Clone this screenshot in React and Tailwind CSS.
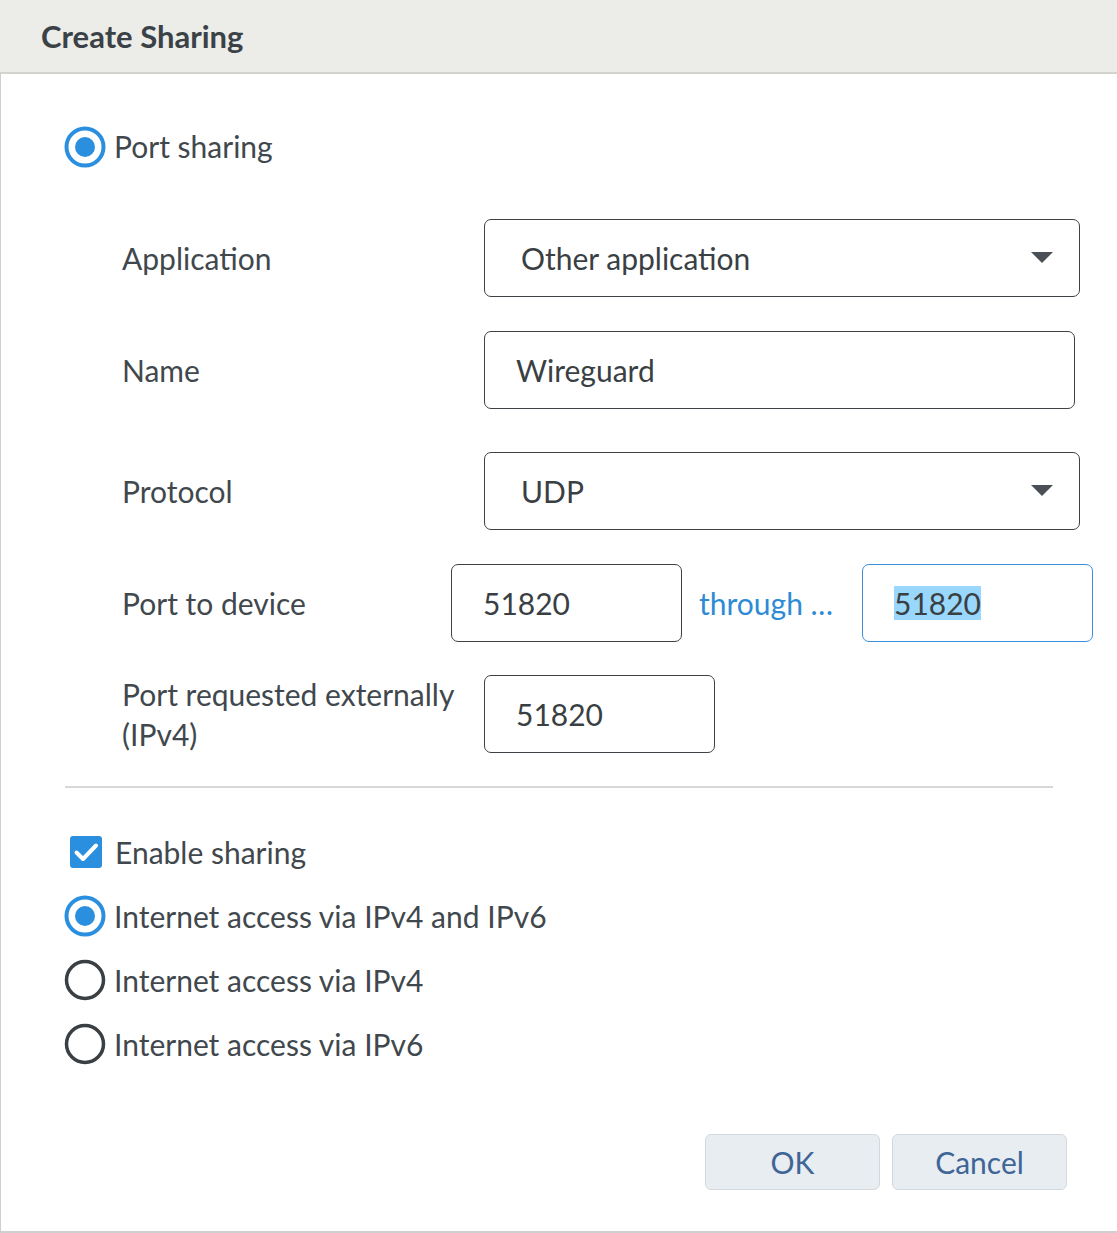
import React from 'react';

const font = { fontFamily: 'Lato, "Open Sans", sans-serif' };

function Radio({ checked }) {
  return (
    <svg width="42" height="42" viewBox="0 0 42 42" className="shrink-0">
      <circle
        cx="21"
        cy="21"
        r="18.5"
        fill="white"
        stroke={checked ? '#2b8fe0' : '#3a3f44'}
        strokeWidth={checked ? 4 : 3.5}
      />
      {checked && <circle cx="21" cy="21" r="10" fill="#2b8fe0" />}
    </svg>
  );
}

function Checkbox() {
  return (
    <div className="w-[32px] h-[32px] rounded-[3px] bg-[#2b8fe0] flex items-center justify-center shrink-0">
      <svg width="28" height="28" viewBox="0 0 28 28">
        <path d="M4.5 14.5l6.5 6.5L24 7.5" fill="none" stroke="white" strokeWidth="4" strokeLinecap="round" strokeLinejoin="round" />
      </svg>
    </div>
  );
}

function Caret() {
  return (
    <svg width="22" height="12" viewBox="0 0 22 12">
      <path d="M0 0h22L11 11z" fill="#4a5055" />
    </svg>
  );
}

function Field({ children, className = '' }) {
  return (
    <div className={`h-[78px] border-[1.5px] border-[#3d4247] rounded-[7px] bg-white flex items-center text-[30px] text-[#3a3f44] ${className}`}>
      {children}
    </div>
  );
}

function Row({ label, children, className = '' }) {
  return (
    <div className={`flex items-center ${className}`}>
      <div className="w-[483px] pl-[121px] shrink-0 text-[30px] text-[#41484d] leading-[40px]">{label}</div>
      {children}
    </div>
  );
}

function Option({ children, checked }) {
  return (
    <div className="flex items-center gap-[8px] h-[42px]">
      <Radio checked={checked} />
      <span className="text-[30px] leading-[40px] text-[#41484d]">{children}</span>
    </div>
  );
}

export default function App() {
  return (
    <div className="w-[1117px] h-[1233px] bg-white" style={font}>
      <div className="h-[74px] bg-[#ecece8] border-b-2 border-[#d3d3d0] flex items-center pl-[41px]">
        <span className="text-[31px] font-bold text-[#3b4247]">Create Sharing</span>
      </div>
      <div className="h-[1159px] border-l border-b-2 border-[#cfcfcf] relative">
        <div className="flex items-center gap-[8px] pl-[63px] pt-[50px]">
          <Radio checked />
          <span className="text-[30px] text-[#41484d]">Port sharing</span>
        </div>

        <Row label="Application" className="mt-[50px]">
          <Field className="w-[596px] pl-[36px] pr-[26px] justify-between">
            <span>Other application</span>
            <Caret />
          </Field>
        </Row>

        <Row label="Name" className="mt-[34px]">
          <Field className="w-[591px] pl-[31px]">
            <span>Wireguard</span>
          </Field>
        </Row>

        <Row label="Protocol" className="mt-[43px]">
          <Field className="w-[596px] pl-[36px] pr-[26px] justify-between">
            <span>UDP</span>
            <Caret />
          </Field>
        </Row>

        <div className="flex items-center mt-[34px]">
          <div className="w-[450px] pl-[121px] shrink-0 text-[30px] text-[#41484d]">Port to device</div>
          <Field className="w-[231px] pl-[31px]">
            <span>51820</span>
          </Field>
          <span className="ml-[17px] w-[163px] text-[30px] text-[#2d8bd6]">through …</span>
          <Field className="w-[231px] pl-[31px] !border-[#3a8fd8]">
            <span className="bg-[#99d8fc] leading-[34px]">51820</span>
          </Field>
        </div>

        <Row label={<>Port requested externally<br />(IPv4)</>} className="mt-[32px]">
          <Field className="w-[231px] pl-[31px]">
            <span>51820</span>
          </Field>
        </Row>

        <div className="ml-[64px] w-[988px] h-[2px] bg-[#d8d8d8] mt-[32px]" />

        <div className="pl-[63px] mt-[43px] flex flex-col gap-[22px]">
          <div className="flex items-center gap-[13px] pl-[6px] h-[42px]">
            <Checkbox />
            <span className="text-[30px] leading-[40px] text-[#41484d]">Enable sharing</span>
          </div>
          <Option checked>Internet access via IPv4 and IPv6</Option>
          <Option>Internet access via IPv4</Option>
          <Option>Internet access via IPv6</Option>
        </div>

        <div className="absolute right-[50px] bottom-[41px] flex gap-[12px]">
          <button className="w-[175px] h-[56px] rounded-[6px] bg-[#e8edf2] border-[1.5px] border-[#d3d9de] text-[30px] text-[#3f6596]">OK</button>
          <button className="w-[175px] h-[56px] rounded-[6px] bg-[#e8edf2] border-[1.5px] border-[#d3d9de] text-[30px] text-[#3f6596]">Cancel</button>
        </div>
      </div>
    </div>
  );
}
